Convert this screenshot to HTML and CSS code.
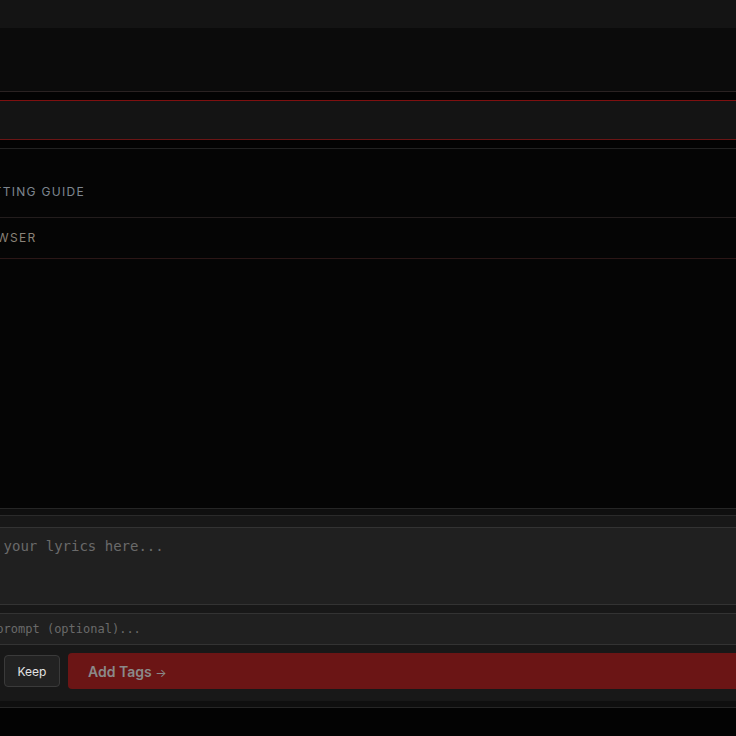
FILE: index.html
```html
<!DOCTYPE html>
<html lang="en">
<head>
    <meta charset="UTF-8">
    <meta name="viewport" content="width=device-width, initial-scale=1.0">
    <title>Lyrics Tagger</title>
    <link rel="stylesheet" href="styles.css">
</head>
<body>
    <div class="app">
        <div class="topbar"></div>
        <div class="header"></div>

        <div class="search-wrap">
            <input type="text" class="search" aria-label="Search tags">
        </div>

        <div class="panels">
            <div class="panel-row first">
                <span class="panel-title guide">Formatting Guide</span>
            </div>
            <div class="panel-row second">
                <span class="panel-title browser">Tag Browser</span>
            </div>
        </div>

        <div class="composer">
            <div class="composer-inner">
                <textarea class="lyrics" placeholder="Enter your lyrics here..."></textarea>
                <input type="text" class="prompt" placeholder="Style prompt (optional)...">
                <div class="actions">
                    <button type="button" class="btn-small">Clear</button>
                    <button type="button" class="btn-small">Keep</button>
                    <button type="button" class="btn-main">Add Tags <span class="arrow">&rarr;</span></button>
                </div>
            </div>
        </div>
    </div>
</body>
</html>
```

FILE: styles.css
```css
* {
    box-sizing: border-box;
}
body {
    margin: 0;
    padding: 0;
    background-color: #030303;
    font-family: Inter, "Noto Sans", sans-serif;
    overflow: hidden;
}
.app {
    display: flex;
    flex-direction: column;
    height: 736px;
    width: 960px;
    margin-left: -72px;
}
.topbar {
    height: 28px;
    background-color: #141414;
}
.header {
    height: 64px;
    background-color: #0b0b0b;
    border-bottom: 1px solid #2a2222;
}
.search-wrap {
    padding: 8px 0;
}
.search {
    display: block;
    width: 100%;
    height: 40px;
    margin: 0;
    background-color: #141414;
    border: none;
    border-top: 1px solid #7f1010;
    border-bottom: 1px solid #6b1515;
    outline: none;
}
.panels {
    flex: 1;
    background-color: #050505;
    border-top: 1px solid #222;
}
.panel-row {
    height: 41px;
    padding: 12px 0 0 17px;
    font-size: 12px;
    line-height: 16px;
}
.panel-row.first {
    height: 69px;
    padding-top: 35px;
    border-bottom: 1px solid #231d1d;
}
.panel-row.second {
    padding-left: 8px;
    border-bottom: 1px solid #2b1717;
}
.panel-title {
    font-weight: 400;
    letter-spacing: 1.3px;
    text-transform: uppercase;
}
.guide {
    color: #7e8690;
}
.browser {
    color: #8a8278;
}
.composer {
    height: 200px;
    padding: 6px 0;
    background-color: #0f0f0f;
    border-top: 1px solid #262626;
    border-bottom: 1px solid #262626;
    margin-bottom: 28px;
}
.composer-inner {
    display: flex;
    flex-direction: column;
    gap: 8px;
    height: 100%;
    padding: 11px 12px 12px;
    background-color: #181818;
    border-top: 1px solid #2a2a2a;
}
.lyrics, .prompt {
    display: block;
    width: 100%;
    margin: 0;
    background-color: #202020;
    border: 1px solid #333;
    color: #ddd;
    font-family: "DejaVu Sans Mono", monospace;
    outline: none;
}
.lyrics {
    height: 78px;
    padding: 8px 12px;
    font-size: 14px;
    line-height: 20px;
    resize: none;
}
.prompt {
    height: 32px;
    padding: 0 12px;
    font-size: 12px;
}
.lyrics::placeholder, .prompt::placeholder {
    color: #6a6a6a;
}
.actions {
    display: flex;
    align-items: center;
    gap: 8px;
    height: 36px;
}
.btn-small {
    width: 56px;
    height: 32px;
    background-color: #222;
    border: 1px solid #3a3a3a;
    border-radius: 4px;
    color: #e2e2e2;
    font-family: Inter, sans-serif;
    font-size: 12px;
    font-weight: 400;
}
.btn-main {
    flex: 1;
    height: 36px;
    padding: 0 20px;
    text-align: left;
    background-color: #6b1515;
    border: none;
    border-radius: 4px;
    color: #8a8a8a;
    font-family: Inter, sans-serif;
    font-size: 14px;
    font-weight: 600;
}
.arrow {
    font-size: 12px;
    font-weight: 400;
}
```
